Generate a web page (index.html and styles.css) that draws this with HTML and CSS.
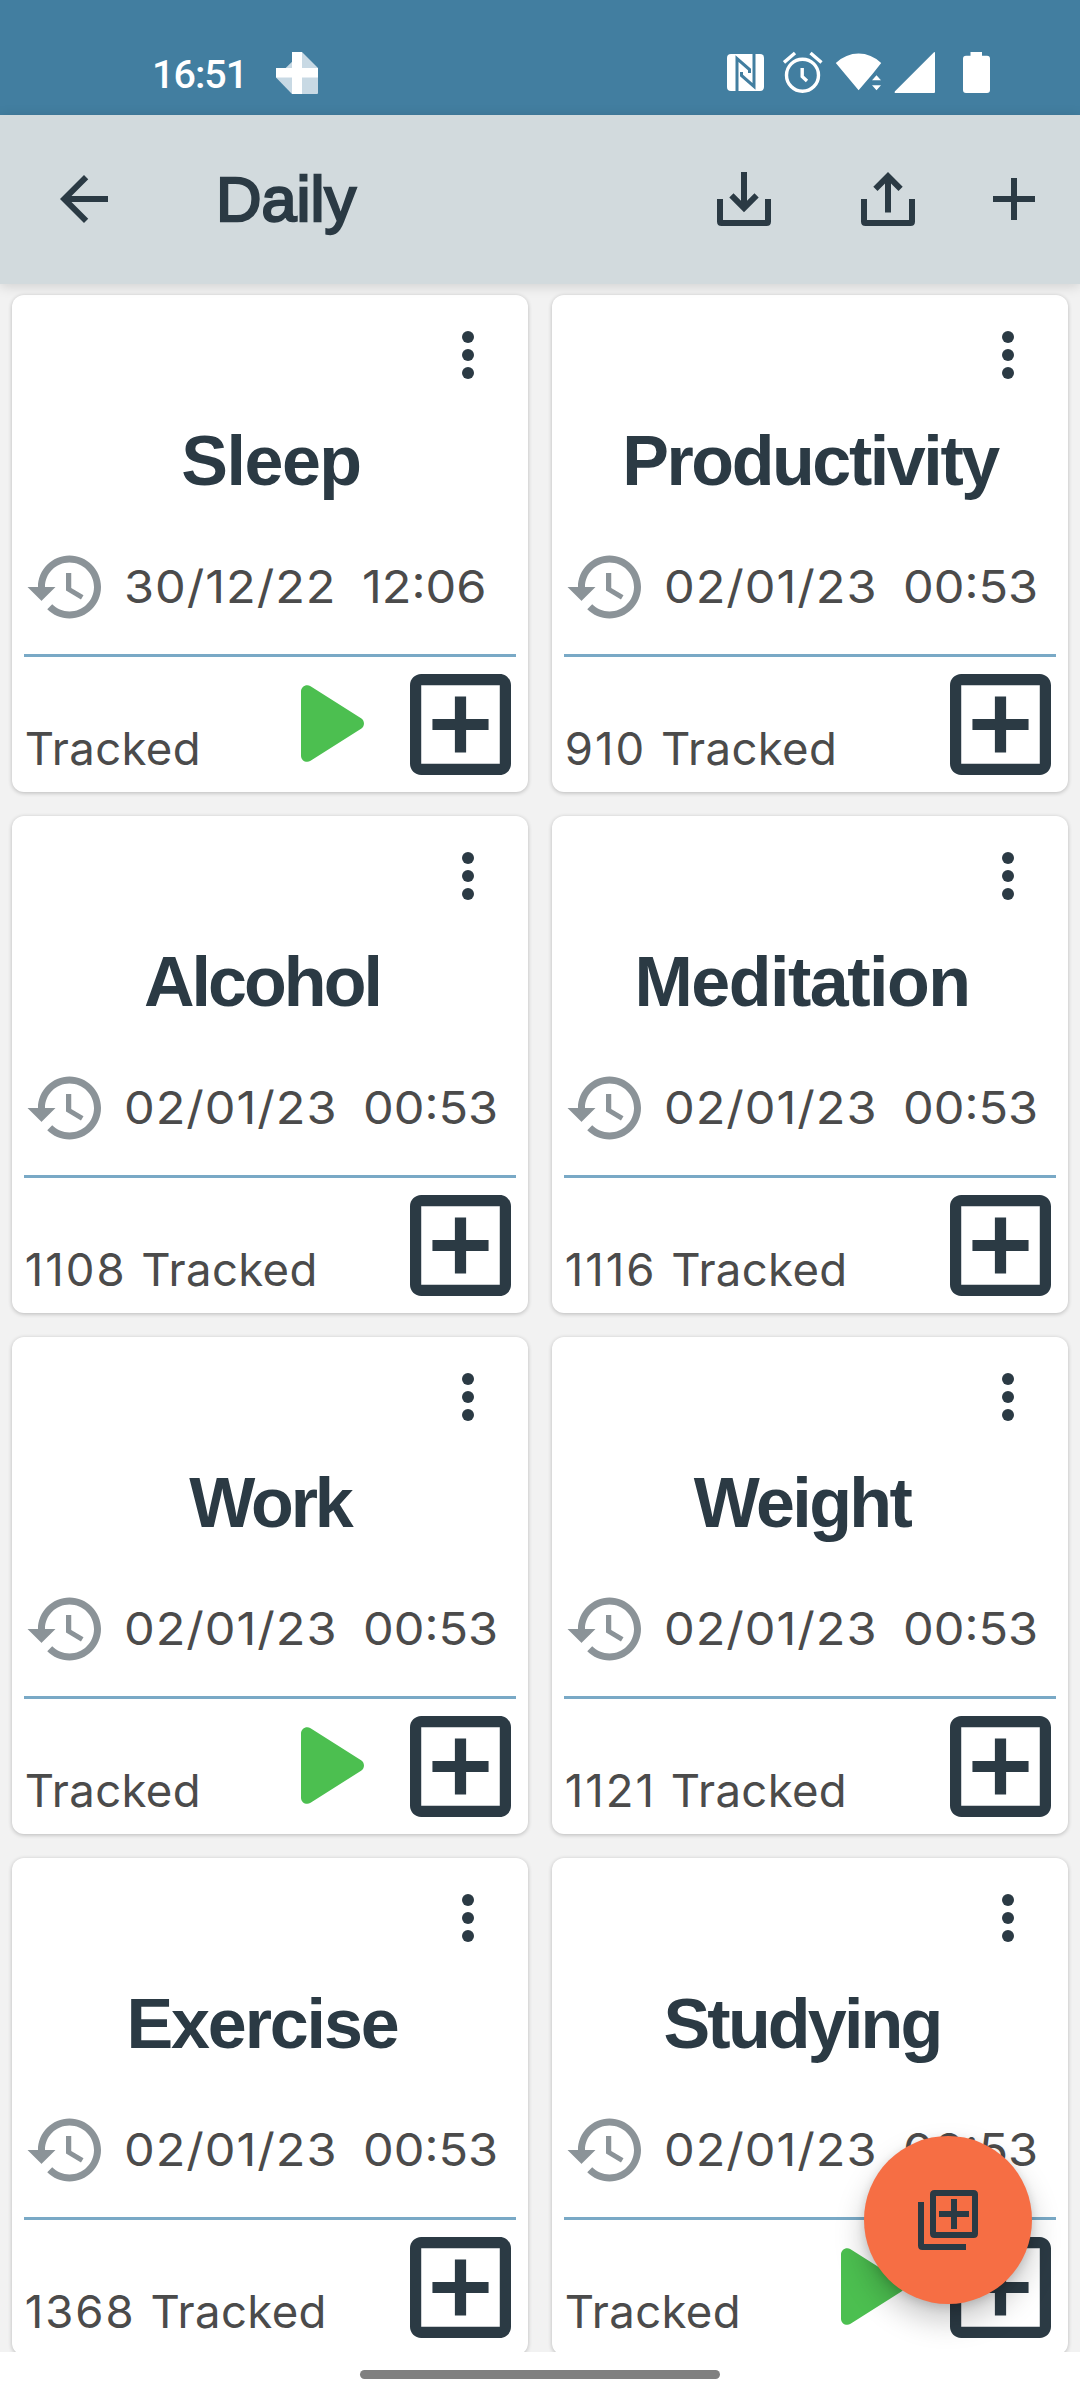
FILE: index.html
```
<!DOCTYPE html>
<html lang="en">
<head>
<meta charset="utf-8">
<title>Daily</title>
<link rel="stylesheet" href="styles.css">
</head>
<body>
<svg class="sprite" aria-hidden="true">
  <symbol id="more" viewBox="0 0 12 48"><circle cx="6" cy="6" r="6"/><circle cx="6" cy="24" r="6"/><circle cx="6" cy="42" r="6"/></symbol>
  <symbol id="history" viewBox="0 0 24 24"><path d="M13 3c-4.97 0-9 4.03-9 9H1l3.89 3.89.07.14L9 12H6c0-3.87 3.13-7 7-7s7 3.13 7 7-3.13 7-7 7c-1.93 0-3.68-.79-4.94-2.06l-1.42 1.42C8.27 19.99 10.51 21 13 21c4.97 0 9-4.03 9-9s-4.03-9-9-9zm-1 5v5l4.28 2.54.72-1.21-3.5-2.08V8H12z"/></symbol>
  <symbol id="play" viewBox="8 5.82 10.15 12.36"><path d="M8 6.82v10.36c0 .79.87 1.27 1.54.84l8.14-5.18c.62-.39.62-1.29 0-1.69L9.54 5.98C8.87 5.55 8 6.03 8 6.82z"/></symbol>
  <symbol id="add-box" viewBox="3 3 18 18"><path d="M19 3H5c-1.11 0-2 .9-2 2v14c0 1.1.89 2 2 2h14c1.1 0 2-.9 2-2V5c0-1.1-.9-2-2-2zm0 16H5V5h14v14zm-8-2h2v-4h4v-2h-4V7h-2v4H7v2h4z"/></symbol>
</svg>

<div class="screen">
  <div class="status-bar">
    <span class="clock">16:51</span>
    <svg class="app-logo" viewBox="276 52 42 42"><path fill="#c8d9e4" d="M302 52l16 16v25q0 1-1 1h-25l-16-16.500z"/><path fill="#fff" d="M292 52h10v16h16v9.500h-16V94h-10V77.500h-16V68h16z"/></svg>
    <div class="status-icons">
      <svg class="nfc" viewBox="727 51 37 44"><rect x="727" y="54" width="37" height="37" rx="4" fill="#fff"/><path class="nfc-line" d="M737 92V58.500L749.500 69.500V73M754 53V86.500L741.500 75.500V72"/></svg>
      <svg class="alarm" viewBox="783 51 40 44"><g class="thin"><circle cx="802.500" cy="75.200" r="16"/><path d="M802.200 68v8.500l4.800 4.500M784 62.500l11-9.500M810.500 53l11 9.500"/></g></svg>
      <svg class="wifi" viewBox="835 51 47 44"><path d="M858.600 90.300L835.800 63Q846 53.500 858.600 53.500T881.200 63L872.500 74ZM872 80.300h9l-4.500-5zM872 85.300h9l-4.500 5z"/></svg>
      <svg class="signal" viewBox="894 51 42 44"><path d="M895 93q-1-.7 0-1.700L934 52.300q1-.6 1 .7V92q0 1-1 1z"/></svg>
      <svg class="battery" viewBox="963 51 27 44"><path d="M970.500 52H982v3.700h5q3 0 3 3V90q0 3-3 3h-21q-3 0-3-3V58.700q0-3 3-3h4.500z"/></svg>
    </div>
  </div>

  <header class="app-bar">
    <svg class="icon" viewBox="0 0 24 24"><path d="M20 11H7.830l5.590-5.590L12 4l-8 8 8 8 1.410-1.410L7.830 13H20v-2z"/></svg>
    <h1 class="page-title">Daily</h1>
    <div class="actions">
      <svg class="icon" viewBox="0 0 24 24"><path d="M11 3h2v9.600l2.500-2.500 1.400 1.400L12 16.400l-4.900-4.900 1.400-1.400 2.500 2.500zM3 12h2v7h14v-7h2v7.500q0 1.500-1.500 1.500h-15Q3 21 3 19.500z"/></svg>
      <svg class="icon" viewBox="0 0 24 24"><path d="M12 3l4.900 4.900-1.400 1.400L13 6.800v9.700h-2V6.800L8.500 9.300 7.100 7.900zM3 12h2v7h14v-7h2v7.500q0 1.500-1.500 1.500h-15Q3 21 3 19.500z"/></svg>
      <svg class="icon icon-add" viewBox="0 0 24 24"><path d="M19 13h-6v6h-2v-6H5v-2h6V5h2v6h6z"/></svg>
    </div>
  </header>

  <main class="cards">
    <article class="card">
      <svg class="more"><use href="#more"/></svg>
      <h2 class="name name-sleep">Sleep</h2>
      <div class="last"><svg class="history"><use href="#history"/></svg><span class="date">30/12/22</span><span class="time">12:06</span></div>
      <div class="foot"><p class="total">Tracked</p><svg class="play"><use href="#play"/></svg><svg class="add-box"><use href="#add-box"/></svg></div>
    </article>
    <article class="card">
      <svg class="more"><use href="#more"/></svg>
      <h2 class="name name-productivity">Productivity</h2>
      <div class="last"><svg class="history"><use href="#history"/></svg><span class="date">02/01/23</span><span class="time">00:53</span></div>
      <div class="foot"><p class="total"><span class="count">910 </span>Tracked</p><svg class="add-box"><use href="#add-box"/></svg></div>
    </article>
    <article class="card">
      <svg class="more"><use href="#more"/></svg>
      <h2 class="name name-alcohol shifted">Alcohol</h2>
      <div class="last"><svg class="history"><use href="#history"/></svg><span class="date">02/01/23</span><span class="time">00:53</span></div>
      <div class="foot"><p class="total"><span class="count">1108 </span>Tracked</p><svg class="add-box"><use href="#add-box"/></svg></div>
    </article>
    <article class="card">
      <svg class="more"><use href="#more"/></svg>
      <h2 class="name name-meditation shifted">Meditation</h2>
      <div class="last"><svg class="history"><use href="#history"/></svg><span class="date">02/01/23</span><span class="time">00:53</span></div>
      <div class="foot"><p class="total"><span class="count">1116 </span>Tracked</p><svg class="add-box"><use href="#add-box"/></svg></div>
    </article>
    <article class="card">
      <svg class="more"><use href="#more"/></svg>
      <h2 class="name name-work">Work</h2>
      <div class="last"><svg class="history"><use href="#history"/></svg><span class="date">02/01/23</span><span class="time">00:53</span></div>
      <div class="foot"><p class="total">Tracked</p><svg class="play"><use href="#play"/></svg><svg class="add-box"><use href="#add-box"/></svg></div>
    </article>
    <article class="card">
      <svg class="more"><use href="#more"/></svg>
      <h2 class="name name-weight shifted">Weight</h2>
      <div class="last"><svg class="history"><use href="#history"/></svg><span class="date">02/01/23</span><span class="time">00:53</span></div>
      <div class="foot"><p class="total"><span class="count">1121 </span>Tracked</p><svg class="add-box"><use href="#add-box"/></svg></div>
    </article>
    <article class="card">
      <svg class="more"><use href="#more"/></svg>
      <h2 class="name name-exercise shifted">Exercise</h2>
      <div class="last"><svg class="history"><use href="#history"/></svg><span class="date">02/01/23</span><span class="time">00:53</span></div>
      <div class="foot"><p class="total"><span class="count">1368 </span>Tracked</p><svg class="add-box"><use href="#add-box"/></svg></div>
    </article>
    <article class="card">
      <svg class="more"><use href="#more"/></svg>
      <h2 class="name name-studying shifted">Studying</h2>
      <div class="last"><svg class="history"><use href="#history"/></svg><span class="date">02/01/23</span><span class="time">00:53</span></div>
      <div class="foot"><p class="total">Tracked</p><svg class="play"><use href="#play"/></svg><svg class="add-box"><use href="#add-box"/></svg></div>
    </article>
  </main>

  <div class="fab">
    <svg class="icon" viewBox="0 0 24 24"><path d="M4 6H2v14.500q0 1.500 1.500 1.500H18v-2H4zM20.500 2h-13Q6 2 6 3.500v13Q6 18 7.500 18h13q1.500 0 1.500-1.500v-13Q22 2 20.500 2zM20 16H8V4h12zM13 15h2v-4h4V9h-4V5h-2v4H9v2h4z"/></svg>
  </div>

  <nav class="nav-bar"><span class="nav-pill"></span></nav>
</div>
</body>
</html>
```
FILE: styles.css
```
* {
  box-sizing: border-box;
}

body,
h1,
h2,
p {
  margin: 0;
}

svg {
  display: block;
  flex: none;
}

.sprite {
  position: absolute;
  width: 0;
  height: 0;
}

.screen {
  position: relative;
  display: flex;
  flex-direction: column;
  width: 1080px;
  height: 2400px;
  overflow: hidden;
  background: #f2f2f2;
  color: #2b3a44;
  font-family: Inter, "Liberation Sans", sans-serif;
}

/* Status bar */
.status-bar {
  display: flex;
  align-items: flex-start;
  height: 115px;
  padding: 51px 90px 0 152px;
  background: #427ea0;
  color: #fff;
}

.clock {
  width: 124px;
  padding-top: 1px;
  font: 500 39.5px/46px Roboto, sans-serif;
  letter-spacing: -1px;
}

.app-logo {
  width: 42px;
  height: 42px;
  margin-top: 1px;
}

.status-icons {
  display: flex;
  margin-left: auto;
  fill: #fff;
}

.status-icons svg {
  height: 44px;
}

.nfc { width: 37px; margin-right: 19px; }
.alarm { width: 40px; margin-right: 12px; }
.wifi { width: 47px; margin-right: 12px; }
.signal { width: 42px; margin-right: 27px; }
.battery { width: 27px; }

.nfc-line {
  fill: none;
  stroke: #427ea0;
  stroke-width: 3;
}

.thin {
  fill: none;
  stroke: #fff;
  stroke-width: 3.4;
}

/* App bar */
.app-bar {
  position: relative;
  z-index: 1;
  display: flex;
  align-items: center;
  height: 169px;
  padding: 0 30px 1px 48px;
  background: #d2dadd;
  box-shadow: 0 2px 12px rgba(0, 0, 0, 0.15);
}

.icon {
  width: 72px;
  height: 72px;
  fill: #2b3a44;
}

.page-title {
  margin-left: 96px;
  font: 400 63px/72px "Liberation Sans", sans-serif;
  -webkit-text-stroke: 2.4px #2b3a44;
}

.actions {
  display: flex;
  gap: 72px;
  margin-left: auto;
}

.icon-add {
  margin-left: -18px;
}

/* Card grid */
.cards {
  display: grid;
  grid-template-columns: 516px 516px;
  grid-auto-rows: 497px;
  gap: 24px;
  height: 2068px;
  padding: 11px 12px 0;
  overflow: hidden;
}

.card {
  display: flex;
  flex-direction: column;
  padding-top: 36px;
  border-radius: 12px;
  background: #fff;
  box-shadow: 0 1px 4px rgba(0, 0, 0, 0.24);
}

.more {
  align-self: flex-end;
  width: 12px;
  height: 48px;
  margin-right: 54px;
  fill: #2b3a44;
}

.name {
  margin-top: 42px;
  font: 700 70px/80px "Liberation Sans", sans-serif;
  text-align: center;
  white-space: nowrap;
}

.shifted { padding-right: 16px; }

.name-sleep { letter-spacing: -1.5px; padding-left: 2px; }
.name-productivity { letter-spacing: -2.4px; }
.name-alcohol { letter-spacing: -2.95px; }
.name-meditation { letter-spacing: -1.5px; }
.name-work { letter-spacing: -3.05px; }
.name-weight { letter-spacing: -2.6px; }
.name-exercise { letter-spacing: -2.1px; }
.name-studying { letter-spacing: -2.8px; }

.last {
  display: flex;
  align-items: center;
  height: 112px;
  margin: 44px 12px 0;
  padding-bottom: 25px;
  border-bottom: 3px solid #79a9c6;
  color: #4b4b4b;
  font-size: 45.5px;
  line-height: 56px;
}

.history {
  width: 84px;
  height: 84px;
  margin-right: 15.5px;
  fill: #8b9398;
}

/* The digits are set slightly extended */
.date,
.time {
  transform: scaleX(1.07);
  transform-origin: left;
}

.date {
  letter-spacing: 0.9px;
}

.time {
  margin-left: 39.8px;
}

.foot {
  display: flex;
  align-items: flex-end;
  height: 135px;
  padding: 0 17px 17px 12.7px;
}

.total {
  margin-right: auto;
  color: #4b4b4b;
  font-size: 45.5px;
  line-height: 53px;
  letter-spacing: 0.35px;
  white-space: nowrap;
}

.count {
  letter-spacing: 2px;
}

.play {
  width: 63px;
  height: 77px;
  margin: 0 46px 13px 0;
  fill: #4cbf50;
}

.add-box {
  width: 101px;
  height: 101px;
  fill: #2b3a44;
}

/* Floating action button */
.fab {
  position: absolute;
  left: 864px;
  top: 2136px;
  display: flex;
  align-items: center;
  justify-content: center;
  width: 168px;
  height: 168px;
  border-radius: 50%;
  background: #f66e44;
  box-shadow: 0 16px 30px rgba(0, 0, 0, 0.22), 0 3px 10px rgba(0, 0, 0, 0.14);
}

/* System navigation */
.nav-bar {
  display: flex;
  justify-content: center;
  height: 48px;
  padding-top: 18px;
  background: #fff;
}

.nav-pill {
  width: 360px;
  height: 9px;
  border-radius: 5px;
  background: #808080;
}
```
